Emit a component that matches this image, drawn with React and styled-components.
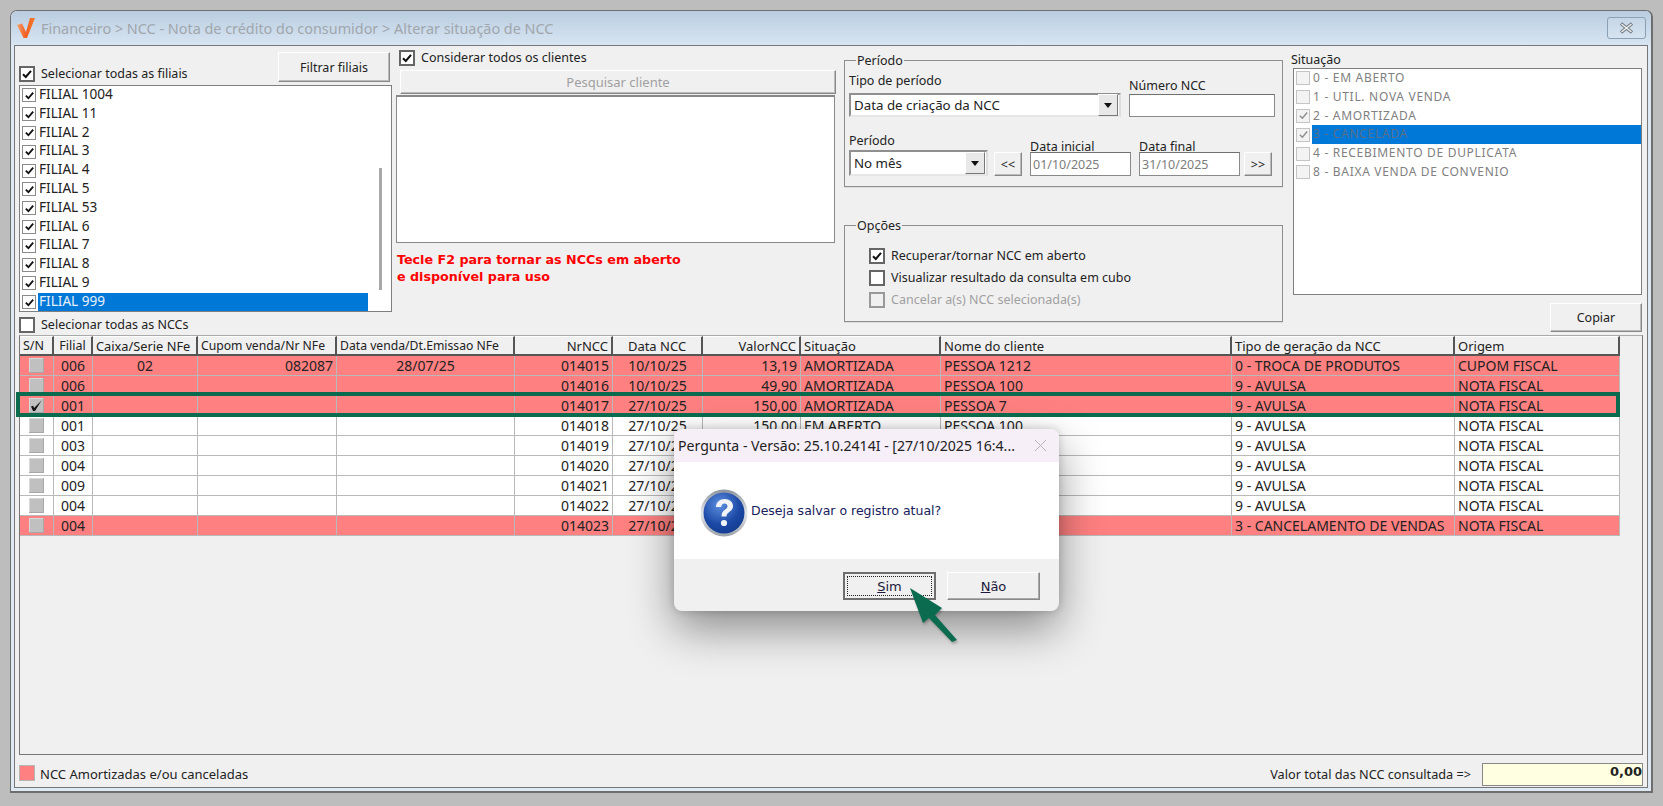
import React from "react";
import styled, { createGlobalStyle } from "styled-components";

const Global = createGlobalStyle`
  html, body { margin: 0; padding: 0; background: #bdbdbd; }
  body { width: 1663px; height: 806px; overflow: hidden; font-family: "Noto Sans", "Liberation Sans", sans-serif; font-size: 12px; color: #222; }
  * { box-sizing: border-box; }
`;
const Page = styled.div`width:1663px;height:806px;padding:10px 10px 13px 10px;position:relative;`;
const Win = styled.div`width:100%;height:100%;background:#dfe9f3;border:1px solid #6e6e6e;border-right-width:2px;border-bottom-width:2px;border-radius:7px 7px 0 0;padding:0 3px 3px 3px;display:flex;flex-direction:column;`;
const TitleBar = styled.div`height:34px;flex:none;display:flex;align-items:center;gap:4px;background:linear-gradient(#b9cde0,#d8e5f2);margin:0 -3px;padding-left:4px;border-radius:6px 6px 0 0;`;
const TitleText = styled.div`font-size:14.4px;color:#a0a6ac;flex:1;white-space:nowrap;`;
const CloseBox = styled.div`width:39px;height:22px;margin-right:5px;border:1px solid #8ba0b4;border-radius:3px;background:linear-gradient(#c5d6e6,#d6e3f0);display:flex;align-items:center;justify-content:center;`;
const Client = styled.div`flex:1;background:#f0f0f0;border:1px solid #777;padding:0 4px;display:flex;flex-direction:column;min-height:0;`;
const Top = styled.div`height:289px;flex:none;display:flex;`;
const Col1 = styled.div`width:373px;flex:none;display:flex;flex-direction:column;`;
const Col1Head = styled.div`height:39px;display:flex;justify-content:space-between;padding-top:6px;padding-right:2px;`;
const BottomCheck = styled.div`margin-top:auto;padding-bottom:3px;`;
const CheckRow = styled.label`display:flex;align-items:center;gap:6px;height:15px;font-size:12.5px;white-space:nowrap;color:${p=>p.$dim?"#a0a0a0":"#222"};margin-top:${p=>p.$t||0}px;margin-left:${p=>p.$l||0}px;`;
const Box = styled.span`width:16px;height:16px;flex:none;border:2px solid ${p=>p.$dim?"#999":"#666"};background:${p=>p.$fill||"#fff"};display:inline-flex;align-items:center;justify-content:center;`;
const SmallBox = styled.span`width:14px;height:14px;flex:none;border:1px solid ${p=>p.$dim?"#c4c4c4":"#8a8a8a"};background:${p=>p.$dim?"#f3f3f3":"#fff"};display:inline-flex;align-items:center;justify-content:center;`;
const WinBtn = styled.button`font:inherit;font-size:12.5px;color:${p=>p.$dim?"#a0a0a0":"#222"};background:#f0f0f0;border:1px solid;border-color:#fff #888 #888 #fff;box-shadow:inset -1px -1px 0 #bbb;padding:0;width:${p=>p.$w}px;height:${p=>p.$h}px;flex:none;`;
const ListBox = styled.div`height:227px;background:#fff;border:1px solid #7f7f7f;position:relative;overflow:hidden;padding:0 0 0 2px;`;
const FilialRow = styled.div`height:18.8px;display:flex;align-items:center;font-size:13.6px;white-space:nowrap;`;
const FilialText = styled.span`margin-left:2px;height:100%;line-height:16.5px;padding-left:1px;width:${p=>p.$sel?"330px":"auto"};background:${p=>p.$sel?"#0078d7":"transparent"};color:${p=>p.$sel?"#e7f1fb":"#222"};`;
const Scroll = styled.div`position:absolute;right:9px;top:82px;width:3px;height:122px;background:#a8a8a8;`;
const Col2 = styled.div`width:440px;flex:none;margin-left:4px;padding-top:4px;display:flex;flex-direction:column;`;
const SearchBtn = styled(WinBtn)`margin:5px 0 0 4px;font-size:13px;`;
const Memo = styled.div`height:148px;width:439px;margin-top:1px;background:#fff;border:1px solid #8a8a8a;border-top:2px solid #888;`;
const Red = styled.div`margin:9px 0 0 1px;color:#f00;font-family:"DejaVu Sans",sans-serif;font-weight:700;font-size:12.7px;line-height:16.5px;`;
const Col3 = styled.div`width:439px;flex:none;margin-left:8px;padding-top:7px;display:flex;flex-direction:column;`;
const Group = styled.fieldset`margin:0;padding:0 4px;min-width:0;border:1px solid #8e8e8e;border-radius:0;box-shadow:0 1px 0 #ddd;height:${p=>p.$h}px;flex:none;margin-top:${p=>p.$t||0}px;`;
const Legend = styled.legend`margin-left:7px;padding:0 1px;font-size:12.5px;line-height:15px;`;
const FormRow = styled.div`display:flex;align-items:flex-end;margin-top:${p=>p.$t||0}px;`;
const Field = styled.div`display:flex;flex-direction:column;width:${p=>p.$w}px;flex:none;margin-left:${p=>p.$l||0}px;`;
const Lbl = styled.div`font-size:12.5px;line-height:15px;height:15px;white-space:nowrap;margin-bottom:${p=>p.$b}px;`;
const Select = styled.div`height:${p=>p.$h}px;border:2px solid #8f8f8f;border-right-color:#ddd;border-bottom-color:#e6e6e6;background:#fff;display:flex;align-items:center;padding:0 1px 0 3px;font-size:13.3px;white-space:nowrap;`;
const SelText = styled.span`flex:1;`;
const Arrow = styled.span`width:20px;height:22px;background:#e8e8e8;border:1px solid;border-color:#fff #777 #777 #fff;display:flex;align-items:center;justify-content:center;`;
const Inp = styled.div`height:${p=>p.$h}px;background:#fff;border:1px solid #8a8a8a;border-top-color:#707070;padding:0 2px;display:flex;align-items:center;font-size:12.5px;color:${p=>p.$dim?"#7d7d7d":"#222"};`;
const NavBtn = styled(WinBtn)`margin-left:${p=>p.$l||0}px;`;
const Checks = styled.div`display:flex;flex-direction:column;gap:7px;padding:15px 0 0 20px;`;
const Col4 = styled.div`flex:1;margin-left:8px;padding-top:6px;display:flex;flex-direction:column;`;
const SitLabel = styled.div`font-size:12.5px;line-height:15px;height:16px;`;
const SitList = styled.div`margin-left:2px;width:349px;height:227px;background:#fff;border:1px solid #7f7f7f;padding-left:2px;`;
const SitRow = styled.div`height:18.8px;display:flex;align-items:center;font-size:12px;color:#808080;white-space:nowrap;letter-spacing:.7px;`;
const SitText = styled.span`margin-left:2px;padding-left:1px;height:100%;line-height:17px;flex:${p=>p.$sel?1:"none"};background:${p=>p.$sel?"#0078d7":"transparent"};color:${p=>p.$sel?"#5a6f88":"#808080"};`;
const CopyRow = styled.div`display:flex;justify-content:flex-end;margin:8px 0 0 0;width:351px;`;
const GridBox = styled.div`height:420px;flex:none;border:1px solid #777;border-top-color:#aaa;background:#f0f0f0;width:1624px;`;
const cols = "34px 39px 105px 139px 178px 98px 90px 98px 140px 291px 223px 165px";
const Row = styled.div`display:grid;grid-template-columns:${cols};width:1600px;height:20px;background:${p=>p.$red?"#ff8080":"#fff"};`;
const HeadRow = styled(Row)`background:#f0f0f0;`;
const Cell = styled.div`border-right:1px solid #b9b9b9;border-bottom:1px solid #b9b9b9;font-size:14px;padding:0 3px;white-space:nowrap;overflow:hidden;display:flex;justify-content:${p=>p.$a==="right"?"flex-end":p.$a==="center"?"center":"flex-start"};align-items:center;color:#222;`;
const HeadCell = styled(Cell)`border-right:2px solid #555;border-bottom:2px solid #555;border-top:1px solid #fff;font-size:${p=>p.$s||13}px;`;
const GridCheck = styled.span`width:15px;height:15px;background:#c0c0c0;box-shadow:inset -1px -1px 0 #a8a8a8,inset 1px 1px 0 #d8d8d8;display:flex;align-items:center;justify-content:center;`;
const Highlight = styled.div`position:absolute;left:16px;top:392px;width:1604px;height:25px;border:4px solid #0b6b4e;pointer-events:none;`;
const Foot = styled.div`flex:1;display:flex;align-items:center;padding:6px 0 0 0;`;
const Swatch = styled.span`width:16px;height:16px;background:#ff8080;border:1px solid #b5b5b5;flex:none;margin-top:-2px;`;
const FootText = styled.span`font-size:13px;margin-left:5px;white-space:nowrap;`;
const TotalLbl = styled.span`margin-left:auto;font-size:12.7px;white-space:nowrap;`;
const Total = styled.div`width:161px;height:23px;background:#ffffe1;border:1px solid #888;margin-left:11px;text-align:right;font-family:"DejaVu Sans",sans-serif;font-weight:700;font-size:13px;line-height:16px;color:#222;`;
const Dialog = styled.div`position:absolute;left:674px;top:429px;width:385px;height:182px;border-radius:8px;overflow:hidden;background:#f0f0f0;box-shadow:0 18px 45px rgba(0,0,0,.42),0 0 8px rgba(0,0,0,.18);display:flex;flex-direction:column;`;
const DlgTitle = styled.div`height:33px;flex:none;background:#f6eff7;display:flex;align-items:center;padding:0 12px 0 4px;font-size:14.1px;color:#222;white-space:nowrap;justify-content:space-between;`;
const DlgBody = styled.div`height:97px;flex:none;background:#fff;display:flex;align-items:center;padding:5px 0 0 26px;gap:3px;`;
const DlgMsg = styled.span`font-family:"DejaVu Sans",sans-serif;font-size:12.5px;color:#16215b;white-space:nowrap;margin-top:-6px;`;
const DlgFoot = styled.div`flex:1;display:flex;justify-content:flex-end;gap:11px;padding:13px 19px 0 0;`;
const DlgBtn = styled.div`width:93px;height:28px;background:#f0f0f0;border:${p=>p.$def?"2px solid #6f6f6f":"1px solid"};border-color:${p=>p.$def?"#6f6f6f":"#fff #888 #888 #fff"};box-shadow:${p=>p.$def?"none":"inset -1px -1px 0 #aaa"};display:flex;align-items:center;justify-content:center;font-family:"DejaVu Sans",sans-serif;font-size:13px;padding:${p=>p.$def?"2px":"0"};color:#1a1a3a;`;
const DotFrame = styled.div`width:100%;height:100%;border:1px dotted #222;display:flex;align-items:center;justify-content:center;`;
const Pointer = styled.svg`position:absolute;left:905px;top:585px;width:60px;height:62px;filter:drop-shadow(1px 2px 1px rgba(0,0,0,.25));`;

const Tick = ({s=12,c="#111",w=2}) => (<svg width={s} height={s} viewBox="0 0 12 12"><path d="M2 6.2 4.8 9 10 2.8" fill="none" stroke={c} strokeWidth={w}/></svg>);
const GridTick = () => (<svg width="13" height="13" viewBox="0 0 13 13"><path d="M1 7.500 3.200 6.800 4 9 11.500 1.500 5 12 3 12z" fill="#111"/></svg>);
const Down = () => (<svg width="8" height="5" viewBox="0 0 8 5"><path d="M0 0h8L4 5z" fill="#111"/></svg>);

const filiais = ["FILIAL 1004","FILIAL 11","FILIAL 2","FILIAL 3","FILIAL 4","FILIAL 5","FILIAL 53","FILIAL 6","FILIAL 7","FILIAL 8","FILIAL 9","FILIAL 999"];
const sits = [["0 - EM ABERTO",0],["1 - UTIL. NOVA VENDA",0],["2 - AMORTIZADA",1],["3 - CANCELADA",1,1],["4 - RECEBIMENTO DE DUPLICATA",0],["8 - BAIXA VENDA DE CONVENIO",0]];
const heads = [["S/N",null,12.5],["Filial","center",12.5],["Caixa/Serie NFe",null,12.8],["Cupom venda/Nr NFe",null,12.2],["Data venda/Dt.Emissao NFe",null,12.2],["NrNCC","right"],["Data NCC","center"],["ValorNCC","right"],["Situação"],["Nome do cliente"],["Tipo de geração da NCC"],["Origem"]];
const rows = [
 [1,"006","02","082087","28/07/25","014015","10/10/25","13,19","AMORTIZADA","PESSOA 1212","0 - TROCA DE PRODUTOS","CUPOM FISCAL"],
 [1,"006","","","","014016","10/10/25","49,90","AMORTIZADA","PESSOA 100","9 - AVULSA","NOTA FISCAL"],
 [1,"001","","","","014017","27/10/25","150,00","AMORTIZADA","PESSOA 7","9 - AVULSA","NOTA FISCAL",1],
 [0,"001","","","","014018","27/10/25","150,00","EM ABERTO","PESSOA 100","9 - AVULSA","NOTA FISCAL"],
 [0,"003","","","","014019","27/10/25","","","","9 - AVULSA","NOTA FISCAL"],
 [0,"004","","","","014020","27/10/25","","","","9 - AVULSA","NOTA FISCAL"],
 [0,"009","","","","014021","27/10/25","","","","9 - AVULSA","NOTA FISCAL"],
 [0,"004","","","","014022","27/10/25","","","","9 - AVULSA","NOTA FISCAL"],
 [1,"004","","","","014023","27/10/25","","","","3 - CANCELAMENTO DE VENDAS","NOTA FISCAL"],
];
const aligns = [null,"center","center","right","center","right","center","right","left","left","left","left"];

export default function App(){
 return (<Page><Global/>
  <Win>
   <TitleBar>
    <svg width="22" height="22" viewBox="0 0 22 22"><defs><linearGradient id="v" x1="0" y1="0" x2="1" y2="0"><stop offset="0" stopColor="#f8a06a"/><stop offset=".5" stopColor="#f15f22"/><stop offset="1" stopColor="#f47b28"/></linearGradient></defs><path d="M2 8 7 6.500 11 15 15 1 20 1 12 21 8.500 21z" fill="url(#v)"/></svg>
    <TitleText>Financeiro &gt; NCC - Nota de crédito do consumidor &gt; Alterar situação de NCC</TitleText>
    <CloseBox><svg width="15" height="12" viewBox="0 0 15 12"><path d="M2 1.500 13 10.500M13 1.500 2 10.500" stroke="#6f7880" strokeWidth="3.400"/><path d="M2.500 2 12.500 10M12.500 2 2.500 10" stroke="#f2f2f2" strokeWidth="1.400"/></svg></CloseBox>
   </TitleBar>
   <Client>
    <Top>
     <Col1>
      <Col1Head>
       <CheckRow $t={14}><Box><Tick/></Box>Selecionar todas as filiais</CheckRow>
       <WinBtn $w={112} $h={30}>Filtrar filiais</WinBtn>
      </Col1Head>
      <ListBox>
       {filiais.map((f,i)=>(<FilialRow key={f}><SmallBox><Tick s={11}/></SmallBox><FilialText $sel={i===11}>{f}</FilialText></FilialRow>))}
       <Scroll/>
      </ListBox>
      <BottomCheck><CheckRow><Box/>Selecionar todas as NCCs</CheckRow></BottomCheck>
     </Col1>
     <Col2>
      <CheckRow $l={3}><Box><Tick/></Box>Considerar todos os clientes</CheckRow>
      <SearchBtn $dim $w={436} $h={24}>Pesquisar cliente</SearchBtn>
      <Memo/>
      <Red>Tecle F2 para tornar as NCCs em aberto<br/>e disponível para uso</Red>
     </Col2>
     <Col3>
      <Group $h={134}>
       <Legend>Período</Legend>
       <FormRow $t={5}>
        <Field $w={272}><Lbl $b={5}>Tipo de período</Lbl><Select $h={24}><SelText>Data de criação da NCC</SelText><Arrow><Down/></Arrow></Select></Field>
        <Field $w={146} $l={8}><Lbl $b={1}>Número NCC</Lbl><Inp $h={23}/></Field>
       </FormRow>
       <FormRow $t={16}>
        <Field $w={139}><Lbl $b={2}>Período</Lbl><Select $h={26}><SelText>No mês</SelText><Arrow><Down/></Arrow></Select></Field>
        <NavBtn $w={28} $h={24} $l={6}>&lt;&lt;</NavBtn>
        <Field $w={101} $l={8}><Lbl $b={-2}>Data inicial</Lbl><Inp $dim $h={24}>01/10/2025</Inp></Field>
        <Field $w={101} $l={8}><Lbl $b={-2}>Data final</Lbl><Inp $dim $h={24}>31/10/2025</Inp></Field>
        <NavBtn $w={28} $h={24} $l={4}>&gt;&gt;</NavBtn>
       </FormRow>
      </Group>
      <Group $h={104} $t={31}>
       <Legend>Opções</Legend>
       <Checks>
        <CheckRow><Box><Tick/></Box>Recuperar/tornar NCC em aberto</CheckRow>
        <CheckRow><Box/>Visualizar resultado da consulta em cubo</CheckRow>
        <CheckRow $dim><Box $fill="#f0f0f0" $dim/>Cancelar a(s) NCC selecionada(s)</CheckRow>
       </Checks>
      </Group>
     </Col3>
     <Col4>
      <SitLabel>Situação</SitLabel>
      <SitList>
       {sits.map(([t,c,s])=>(<SitRow key={t}><SmallBox $dim>{c?<Tick s={11} c="#8f8f8f" w={1.6}/>:null}</SmallBox><SitText $sel={s}>{t}</SitText></SitRow>))}
      </SitList>
      <CopyRow><WinBtn $w={92} $h={29}>Copiar</WinBtn></CopyRow>
     </Col4>
    </Top>
    <GridBox>
     <HeadRow>{heads.map(([h,a,s])=>(<HeadCell key={h} $a={a} $s={s}>{h}</HeadCell>))}</HeadRow>
     {rows.map((r,i)=>(
      <Row key={i} $red={r[0]===1}>
       <Cell $a="center"><GridCheck>{r[12]?<GridTick/>:null}</GridCheck></Cell>
       {r.slice(1,12).map((v,j)=>(<Cell key={j} $a={aligns[j+1]}>{v}</Cell>))}
      </Row>
     ))}
    </GridBox>
    <Foot>
     <Swatch/><FootText>NCC Amortizadas e/ou canceladas</FootText>
     <TotalLbl>Valor total das NCC consultada =&gt;</TotalLbl>
     <Total>0,00</Total>
    </Foot>
   </Client>
  </Win>
  <Highlight/>
  <Dialog>
   <DlgTitle><span>Pergunta - Versão: 25.10.2414I - [27/10/2025 16:4...</span>
    <svg width="13" height="13" viewBox="0 0 13 13"><path d="M1 1l11 11M12 1L1 12" stroke="#b8b2bb" strokeWidth="1"/></svg></DlgTitle>
   <DlgBody>
    <svg width="48" height="50" viewBox="0 0 48 50"><defs><radialGradient id="q" cx=".4" cy=".3" r=".8"><stop offset="0" stopColor="#5d8fe0"/><stop offset=".6" stopColor="#1c49a6"/><stop offset="1" stopColor="#123a8c"/></radialGradient><linearGradient id="r" x1="0" y1="0" x2="0" y2="1"><stop offset="0" stopColor="#8b939c"/><stop offset=".5" stopColor="#e4e7ea"/><stop offset="1" stopColor="#9da3aa"/></linearGradient></defs><circle cx="24" cy="25" r="23.500" fill="url(#r)"/><circle cx="24" cy="25" r="20.500" fill="url(#q)"/><path d="M16 19c0-5 4-8 8.500-8 5 0 8.500 3 8.500 7 0 3-2 4.800-4 6.200-2 1.300-2.500 2.300-2.500 4.300h-5c0-3.500 1-5 3-6.500 1.800-1.300 3-2.200 3-3.800 0-1.500-1.300-2.700-3-2.700-2 0-3.200 1.300-3.300 3.500z" fill="#f1f3f6"/><circle cx="24" cy="35" r="3.100" fill="#f1f3f6"/></svg>
    <DlgMsg>Deseja salvar o registro atual?</DlgMsg>
   </DlgBody>
   <DlgFoot>
    <DlgBtn $def><DotFrame><u>S</u>im</DotFrame></DlgBtn>
    <DlgBtn><u>N</u>ão</DlgBtn>
   </DlgFoot>
  </Dialog>
  <Pointer viewBox="0 0 60 62"><path d="M5 3 37 23 30 30 52 55 47 57 24 33 18 38z" fill="#0b6b4e"/></Pointer>
 </Page>);
}
